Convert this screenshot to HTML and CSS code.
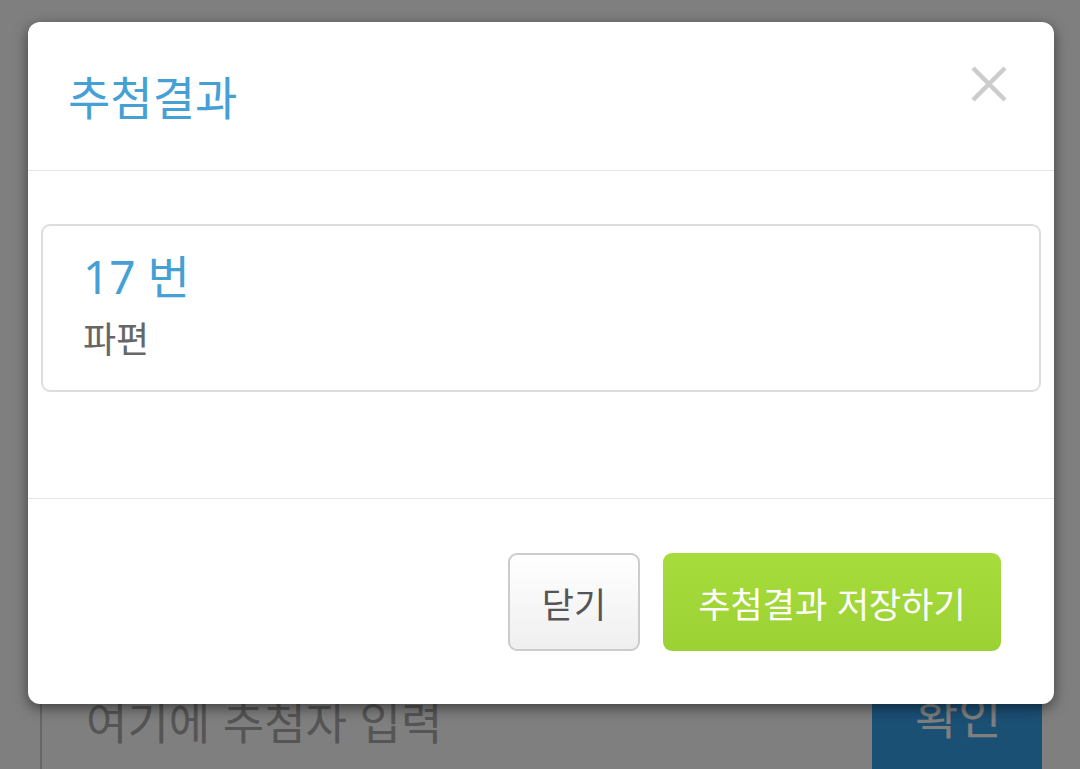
FILE: index.html
```html
<!DOCTYPE html>
<html lang="ko">
<head>
<meta charset="utf-8">
<link rel="stylesheet" href="styles.css">
</head>
<body>
<div class="page">
  <div class="entry-row">
    <div class="entry-input">여기에 추첨자 입력</div>
    <div class="entry-btn">확인</div>
  </div>
</div>
<div class="backdrop"></div>
<div class="modal">
  <div class="modal-header">
    <h4 class="modal-title">추첨결과</h4>
    <button class="close" aria-label="close">
      <svg width="36" height="36" viewBox="0 0 36 36"><path d="M2 2L34 34M34 2L2 34" stroke="#cccccc" stroke-width="4.5" fill="none"/></svg>
    </button>
  </div>
  <div class="modal-body">
    <div class="result-panel">
      <div class="result-num">17 번</div>
      <div class="result-name">파편</div>
    </div>
  </div>
  <div class="modal-footer">
    <button class="btn btn-default">닫기</button>
    <button class="btn btn-save">추첨결과 저장하기</button>
  </div>
</div>
</body>
</html>
```
FILE: styles.css
```css
* { box-sizing: border-box; }
html, body { margin: 0; padding: 0; }
body {
  width: 1080px;
  height: 769px;
  overflow: hidden;
  background: #ffffff;
  font-family: "Noto Sans", "Noto Sans CJK KR", sans-serif;
  position: relative;
}
.page {
  padding: 660px 38px 0 40px;
}
.entry-row {
  display: flex;
  height: 130px;
}
.entry-input {
  flex: 1;
  border: 2px solid #cccccc;
  border-right: none;
  font-family: "Noto Sans CJK KR", sans-serif;
  font-size: 45px;
  line-height: 1;
  color: #aaaaaa;
  padding: 36px 0 0 44px;
}
.entry-btn {
  width: 170px;
  background: #36a0ea;
  color: #ffffff;
  font-family: "Noto Sans CJK KR", sans-serif;
  font-size: 47px;
  line-height: 1;
  padding: 30px 0 0 43px;
}
.backdrop {
  position: absolute;
  inset: 0;
  background: rgba(0, 0, 0, 0.5);
}
.modal {
  position: absolute;
  left: 28px;
  top: 22px;
  width: 1026px;
  height: 682px;
  background: #ffffff;
  border-radius: 12px;
  box-shadow: 0 4px 14px rgba(0, 0, 0, 0.5);
  display: flex;
  flex-direction: column;
}
.modal-header {
  height: 149px;
  border-bottom: 1px solid #e5e5e5;
  display: flex;
  align-items: center;
  justify-content: space-between;
  padding: 0 47px 0 40px;
}
.modal-title {
  margin: 0;
  font-family: "Noto Sans CJK KR", sans-serif;
  font-weight: 400;
  font-size: 46px;
  line-height: 1;
  color: #45a0d6;
  margin-top: -2px;
}
.close {
  align-self: flex-start;
  margin-top: 44px;
  border: 0;
  background: none;
  padding: 0;
  width: 36px;
  height: 36px;
  display: block;
}
.close svg { display: block; }
.modal-body {
  height: 328px;
  padding: 53px 13px 0 13px;
  border-bottom: 1px solid #e5e5e5;
}
.result-panel {
  height: 168px;
  border: 2px solid #dddddd;
  border-radius: 9px;
  padding: 20px 40px 0 40px;
}
.result-num {
  font-size: 46px;
  line-height: 60px;
  color: #45a0d6;
}
.result-name {
  font-family: "Noto Sans CJK KR", sans-serif;
  font-size: 36px;
  line-height: 62px;
  color: #666666;
}
.modal-footer {
  flex: 1;
  display: flex;
  justify-content: flex-end;
  align-items: flex-start;
  gap: 23px;
  padding: 54px 53px 0 0;
}
.btn {
  font-family: "Noto Sans CJK KR", sans-serif;
  font-size: 35px;
  height: 98px;
  border-radius: 9px;
  padding: 0;
  cursor: pointer;
}
.btn-default {
  width: 132px;
  background: linear-gradient(#ffffff, #efefef);
  border: 2px solid #cccccc;
  color: #555555;
}
.btn-save {
  width: 338px;
  background: linear-gradient(#a6dc3b, #9bd133);
  border: 0;
  color: #ffffff;
}
```
